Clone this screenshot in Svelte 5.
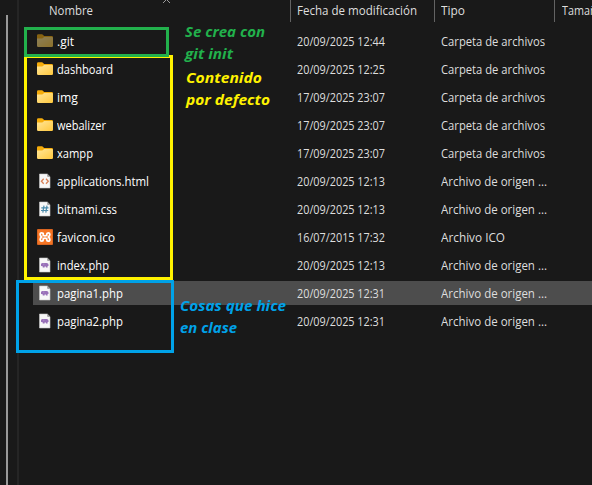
<script>
  const carpeta = ['Carpeta de archivos', 104];
  const origen = ['Archivo de origen ...', 106];
  const files = [
    { name: '.git', w: 17, icon: 'folder', dim: true, date: '20/09/2025 12:44', type: carpeta },
    { name: 'dashboard', w: 56, icon: 'folder', date: '20/09/2025 12:25', type: carpeta },
    { name: 'img', w: 21, icon: 'folder', date: '17/09/2025 23:07', type: carpeta },
    { name: 'webalizer', w: 49, icon: 'folder', date: '17/09/2025 23:07', type: carpeta },
    { name: 'xampp', w: 36, icon: 'folder', date: '17/09/2025 23:07', type: carpeta },
    { name: 'applications.html', w: 92, icon: 'html', date: '20/09/2025 12:13', type: origen },
    { name: 'bitnami.css', w: 60, icon: 'css', date: '20/09/2025 12:13', type: origen },
    { name: 'favicon.ico', w: 58, icon: 'xampp', date: '16/07/2015 17:32', type: ['Archivo ICO', 64] },
    { name: 'index.php', w: 52, icon: 'php', date: '20/09/2025 12:13', type: origen },
    { name: 'pagina1.php', w: 66, icon: 'php', date: '20/09/2025 12:31', type: origen, selected: true },
    { name: 'pagina2.php', w: 66, icon: 'php', date: '20/09/2025 12:31', type: origen }
  ];
  const notes = [
    { cls: 'green', lines: [['Se crea con', 80], ['git init', 48]] },
    { cls: 'yellow', lines: [['Contenido', 76], ['por defecto', 84]] },
    { cls: 'blue', lines: [['Cosas que hice', 106], ['en clase', 57]] }
  ];

  // Condenses a label horizontally so that it takes the given width.
  function fit(node, width) {
    const natural = node.getBoundingClientRect().width;
    node.style.transform = `scaleX(${width / natural})`;
  }
</script>

{#snippet label(text, width)}
  <span class="label" use:fit={width}>{text}</span>
{/snippet}

{#snippet icon(kind, dim)}
  <svg class="icon" class:dim width="16" height="16" viewBox="0 0 16 16">
    {#if kind === 'folder'}
      <defs>
        <linearGradient id="fold" x1="0" y1="0" x2="1" y2="1">
          <stop offset="0" stop-color="#ffe69a" />
          <stop offset="1" stop-color="#ffc83d" />
        </linearGradient>
      </defs>
      <path d="M0 3.2V2.5Q0 1.2 1.3 1.2H5.2L7.2 3H14.7Q16 3 16 4.3V8H0Z" fill="#f5ac0b" />
      <path d="M0 5.4H5.3L7.2 4H14.8Q16 4 16 5.2V12.8Q16 14 14.8 14H1.2Q0 14 0 12.8Z" fill="url(#fold)" />
    {:else if kind === 'xampp'}
      <rect width="16" height="16" rx="1" fill="#d96521" />
      <rect x="1" y="1" width="14" height="14" rx="1" fill="#f57524" />
      <path d="M4.5 8Q3.2 6.9 3.2 5.3T4.8 3.8Q6.3 3.8 6.3 5.4V6.5Q8 7.3 9.7 6.5V5.4Q9.7 3.8 11.2 3.8T12.8 5.3Q12.8 6.9 11.5 8Q12.8 9.1 12.8 10.7T11.2 12.2Q9.7 12.2 9.7 10.6V9.5Q8 8.7 6.3 9.5V10.6Q6.3 12.2 4.8 12.2T3.2 10.7Q3.2 9.1 4.5 8Z" fill="none" stroke="#fff" stroke-width="1.8" />
    {:else}
      <path d="M2.5 1H10.3L13 3.7V15H2.5Z" fill="#f7f7f7" stroke="#c8c8c8" stroke-width=".6" />
      <path d="M10.3 1V3.7H13Z" fill="#888" />
      {#if kind === 'html'}
        <path d="M6.7 5.8L4.4 8.3L6.7 10.8M9 5.8L11.3 8.3L9 10.8" fill="none" stroke="#d98258" stroke-width="1.3" />
      {:else if kind === 'css'}
        <path d="M7 4.7L5.8 11.6M10 4.7L8.8 11.6M4.3 6.8H11.5M4 9.5H11.2" fill="none" stroke="#4b8bab" stroke-width="1.2" />
      {:else}
        <path d="M4 9V7.2Q4.2 6 5.7 6H9.6Q11.5 6.1 11.5 7.6V8.9H10.6V10.4H8.9V9.6H7.6V10.4H5.7V9.2Z" fill="#9870b8" />
        <path d="M6.8 6.4V8.2" stroke="#b99bd0" stroke-width=".7" />
      {/if}
    {/if}
  </svg>
{/snippet}

<div class="window">
  <aside><div class="scroll"></div></aside>
  <main>
    <header>
      <div class="h name">{@render label('Nombre', 44)}</div>
      <div class="h date">{@render label('Fecha de modificación', 120)}</div>
      <div class="h type">{@render label('Tipo', 24)}</div>
      <div class="h size">{@render label('Tamaño', 41)}</div>
    </header>
    <div class="rows">
      {#each files as f}
        <div class="row" class:selected={f.selected}>
          <div class="file">{@render icon(f.icon, f.dim)}<div class="cell">{@render label(f.name, f.w)}</div></div>
          <div class="cell when">{@render label(f.date, 88)}</div>
          <div class="cell">{@render label(f.type[0], f.type[1])}</div>
        </div>
      {/each}
    </div>
  </main>

  <svg class="sort" width="9" height="4" viewBox="0 0 9 4"><path d="M1 3L4.5 -.5L8 3" fill="none" stroke="#999" /></svg>
  <div class="box yellow"></div>
  <div class="box green"></div>
  <div class="box blue"></div>
  {#each notes as n}
    <div class="note {n.cls}">
      {#each n.lines as [text, width]}
        <div>{@render label(text, width)}</div>
      {/each}
    </div>
  {/each}
</div>

<style>
  :global(body) { background: #191919; }
  .window {
    position: relative; display: flex; width: 592px; height: 485px; overflow: hidden;
    background: #191919; color: #dedede; font: 12px/16px "Open Sans", "Noto Sans", sans-serif;
  }
  aside { box-sizing: border-box; flex: none; width: 19px; padding: 15px 0 0 6px; border-right: 2px solid #252525; }
  .scroll { width: 2px; height: 470px; background: #999; }
  main { flex: 1; min-width: 0; }
  header { display: flex; height: 22px; }
  .h { box-sizing: border-box; flex: none; padding: 3px 0 0 6px; border-left: 1px solid #636363; }
  .h.name { width: 271px; padding-left: 30px; border: 0; }
  .h.date { width: 144px; }
  .h.type { width: 120px; }
  .h.size { width: 60px; padding-left: 7px; }
  .label { display: inline-block; white-space: pre; transform-origin: 0 50%; }
  .rows { display: flex; flex-direction: column; gap: 4px; padding: 7px 0 0 14px; }
  .row { display: flex; align-items: center; height: 24px; }
  .selected { background: #4d4d4d; }
  .file { display: flex; align-items: center; flex: none; width: 264px; gap: 4px; padding-left: 4px; box-sizing: border-box; color: #fff; }
  .icon { flex: none; display: block; }
  .icon.dim { opacity: .5; }
  .cell { flex: none; padding-top: 2px; }
  .when { width: 144px; }
  .sort { position: absolute; left: 162px; top: 0; }
  .box { position: absolute; box-sizing: border-box; border: 3px solid; }
  .green { color: #22b14c; }
  .yellow { color: #fff200; }
  .blue { color: #00a2e8; }
  .box.green { left: 24px; top: 27px; width: 145px; height: 30px; }
  .box.yellow { left: 24px; top: 55px; width: 149px; height: 225px; }
  .box.blue { left: 16px; top: 280px; width: 158px; height: 73px; }
  .note { position: absolute; font: italic bold 15px/22px "Open Sans", "Noto Sans", sans-serif; }
  .note.green { left: 185px; top: 20px; }
  .note.yellow { left: 186px; top: 66px; }
  .note.blue { left: 180px; top: 294px; }
</style>
